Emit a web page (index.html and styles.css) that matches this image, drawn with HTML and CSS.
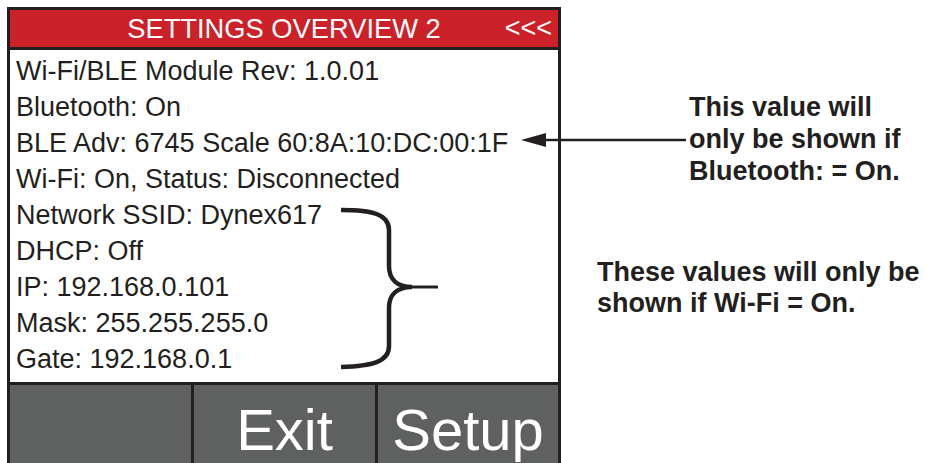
FILE: index.html
```html
<!DOCTYPE html>
<html>
<head>
<meta charset="utf-8">
<link rel="stylesheet" href="styles.css">
</head>
<body>
<div class="page">
  <div class="device">
    <div class="header">
      <span class="title">SETTINGS OVERVIEW 2</span>
      <span class="back">&lt;&lt;&lt;</span>
    </div>
    <div class="list">
      <div class="row">Wi-Fi/BLE Module Rev: 1.0.01</div>
      <div class="row">Bluetooth: On</div>
      <div class="row">BLE Adv: 6745 Scale 60:8A:10:DC:00:1F</div>
      <div class="row">Wi-Fi: On, Status: Disconnected</div>
      <div class="row">Network SSID: Dynex617</div>
      <div class="row">DHCP: Off</div>
      <div class="row">IP: 192.168.0.101</div>
      <div class="row">Mask: 255.255.255.0</div>
      <div class="row">Gate: 192.168.0.1</div>
    </div>
    <div class="footer">
      <div class="key"></div>
      <div class="key">Exit</div>
      <div class="key">Setup</div>
    </div>
  </div>
  <svg class="overlay" width="927" height="463" viewBox="0 0 927 463">
    <line x1="540" y1="140" x2="686" y2="140" stroke="#231f20" stroke-width="2.5"/>
    <polygon points="521,140 546,133 546,147" fill="#231f20"/>
    <path d="M341 210 C372 210 389 214 389 230 L389 266 C389 280 398 287 412 287 C398 287 389 294 389 308 L389 346 C389 362 372 366 341 367" fill="none" stroke="#231f20" stroke-width="4.5"/>
    <line x1="410" y1="287" x2="438" y2="287" stroke="#231f20" stroke-width="3"/>
  </svg>
  <div class="note note-ble">This value will<br>only be shown if<br>Bluetooth: = On.</div>
  <div class="note note-wifi">These values will only be<br>shown if Wi-Fi = On.</div>
</div>
</body>
</html>
```
FILE: styles.css
```css
html, body {
  margin: 0;
  padding: 0;
  background: #ffffff;
  overflow: hidden;
}
.page {
  position: relative;
  width: 927px;
  height: 463px;
  padding: 7px 0 0 7px;
  box-sizing: border-box;
  font-family: "Liberation Sans", Arial, sans-serif;
  color: #231f20;
}
.device {
  width: 554px;
  border: 3px solid #231f20;
  border-bottom: none;
  box-sizing: border-box;
  display: flex;
  flex-direction: column;
}
.header {
  height: 37px;
  background: #cc2129;
  border-bottom: 3px solid #231f20;
  color: #ffffff;
  display: flex;
  align-items: center;
  justify-content: center;
  position: relative;
}
.title {
  font-size: 27.3px;
  line-height: 37px;
}
.back {
  position: absolute;
  right: 6px;
  top: 0;
  font-size: 27px;
  line-height: 36px;
}
.list {
  height: 335px;
  box-sizing: border-box;
  padding: 3px 0 0 6px;
  border-bottom: 3px solid #231f20;
  background: #ffffff;
}
.row {
  font-size: 27px;
  line-height: 36px;
  height: 36px;
  white-space: nowrap;
}
.footer {
  display: grid;
  grid-template-columns: 181px 181px 180px;
  column-gap: 3px;
  background: #231f20;
  height: 80px;
}
.key {
  background: #5f6160;
  color: #ffffff;
  font-size: 58px;
  line-height: 58px;
  text-align: center;
  padding-top: 16px;
}
.overlay {
  position: absolute;
  left: 0;
  top: 0;
}
.note {
  position: absolute;
  font-weight: bold;
  font-size: 27px;
  line-height: 32px;
  white-space: nowrap;
}
.note-ble {
  left: 689px;
  top: 91px;
}
.note-wifi {
  left: 597px;
  top: 257px;
  line-height: 31px;
}
```
